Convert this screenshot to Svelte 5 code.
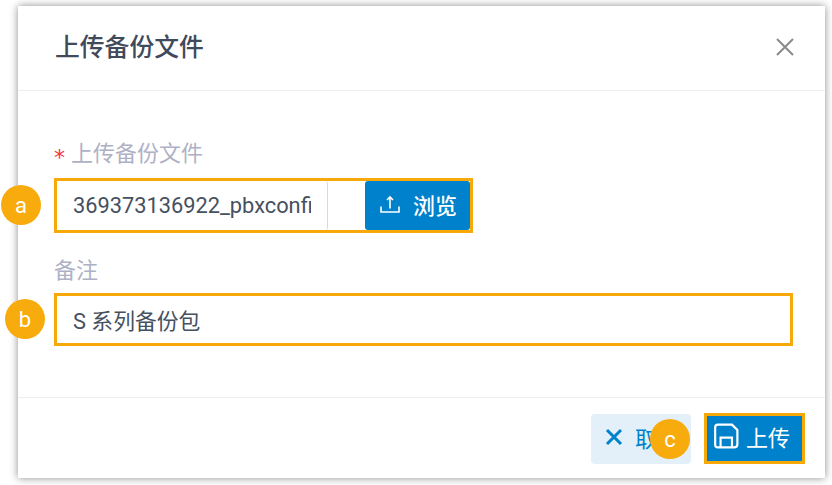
<script lang="ts">
	let fileName = '369373136922_pbxconfig.tar';
	let note = 'S 系列备份包';
</script>

<div class="page">
	<div class="modal">
		<header>
			<h2>上传备份文件</h2>
			<svg class="close" width="20" height="20" viewBox="0 0 20 20" aria-hidden="true">
				<path d="M2 2 L18 18 M18 2 L2 18" />
			</svg>
		</header>

		<div class="body">
			<div class="label first"><span class="req">*</span>上传备份文件</div>
			<div class="mark upload-row">
				<div class="input file"><span class="clip">{fileName}</span></div>
				<button class="primary browse">
					<svg class="up" width="20" height="20" viewBox="0 0 20 20" aria-hidden="true">
						<path d="M10 14.500 V3 M7 6 L10 3 L13 6 M1 12.500 V18 H19 V12.500" />
					</svg>
					<span>浏览</span>
				</button>
				<span class="badge" style="left: -56px; top: 4px">a</span>
			</div>

			<div class="label second">备注</div>
			<div class="mark note-row">
				<div class="input note">{note}</div>
				<span class="badge" style="left: -52px; top: 3px">b</span>
			</div>
		</div>

		<footer>
			<button class="cancel">
				<svg width="18" height="18" viewBox="0 0 18 18" aria-hidden="true">
					<path d="M2 2 L16 16 M16 2 L2 16" />
				</svg>
				<span>取消</span>
				<span class="badge" style="left: 59px; top: 5px">c</span>
			</button>
			<div class="mark save-mark">
				<button class="primary save">
					<svg width="26" height="26" viewBox="0 0 24 24" aria-hidden="true">
						<path d="M2 4 Q2 1.500 4.500 1.500 H17.500 L22.500 6.500 V19.500 Q22.500 22.500 19.500 22.500 H4.500 Q2 22.500 2 20 Z M7 22.500 V13.500 H17.500 V22.500" />
					</svg>
					<span>上传</span>
				</button>
			</div>
		</footer>
	</div>
</div>

<style>
	:global(body) {
		margin: 0;
		background: #fff;
	}
	.page {
		width: 832px;
		height: 485px;
		padding: 6px 7px 7px 18px;
		box-sizing: border-box;
		overflow: hidden;
		font-family: Roboto, 'Noto Sans CJK SC', sans-serif;
	}
	.modal {
		height: 472px;
		background: #fff;
		box-shadow: 0 0 8px rgba(0, 0, 0, 0.45);
		display: flex;
		flex-direction: column;
	}
	header {
		height: 78px;
		border-bottom: 1px solid #eeeef5;
		display: flex;
		align-items: center;
		justify-content: space-between;
		padding: 0 30px 6px 37px;
	}
	h2 {
		margin: 0;
		font-size: 24.800px;
		font-weight: 500;
		color: #3f4a5a;
	}
	.close {
		margin-top: 4px;
	}
	.close path {
		stroke: #8a8a8a;
		stroke-width: 2;
		fill: none;
	}
	.body {
		flex: 1;
		padding: 0 32px 0 36px;
	}
	.label {
		font-size: 22px;
		line-height: 30px;
		color: #aeb1c5;
	}
	.label.first {
		display: flex;
		margin-top: 48px;
		margin-bottom: 9px;
	}
	.label.second {
		margin-top: 23px;
		margin-bottom: 7px;
	}
	.req {
		font-family: 'DejaVu Sans', sans-serif;
		font-size: 22px;
		height: 30px;
		line-height: 38px;
		color: #f5313d;
		width: 17px;
	}
	.mark {
		border: 3px solid #f7a90a;
		position: relative;
		box-sizing: border-box;
	}
	.upload-row {
		width: 419px;
		height: 55px;
		display: flex;
		align-items: stretch;
	}
	.input {
		font-size: 21.800px;
		color: #46505f;
		display: flex;
		align-items: center;
		box-sizing: border-box;
		padding-left: 16px;
	}
	.file {
		width: 271px;
		border-right: 1px solid #d6d8e2;
		border-radius: 0 3px 3px 0;
		padding-right: 16px;
	}
	.clip {
		overflow: hidden;
		white-space: nowrap;
	}
	.note-row {
		width: 739px;
		height: 53px;
	}
	.note {
		height: 100%;
		padding-bottom: 1px;
	}
	button {
		border: none;
		font-family: inherit;
		display: flex;
		align-items: center;
		padding: 0;
		font-size: 22px;
		position: relative;
	}
	.primary {
		background: #0081cc;
		color: #fff;
	}
	.primary path {
		stroke: #fff;
		stroke-width: 2;
		fill: none;
	}
	.primary .up path {
		stroke-width: 1.600;
	}
	.browse {
		margin-left: 37px;
		width: 105px;
		border-radius: 3px;
		padding: 0 0 3px 15px;
		gap: 13px;
		font-weight: 500;
	}
	footer {
		height: 81px;
		border-top: 1px solid #eeeef5;
		display: flex;
		justify-content: flex-end;
		align-items: flex-start;
		padding: 15px 20px 0 0;
		gap: 13px;
		box-sizing: border-box;
	}
	.cancel {
		margin-top: 1px;
		width: 100px;
		height: 50px;
		background: #e3f0f9;
		color: #0081cc;
		border-radius: 4px;
		padding: 0 0 5px 14px;
		gap: 12px;
	}
	.cancel path {
		stroke: #0081cc;
		stroke-width: 3;
		fill: none;
	}
	.save-mark {
		width: 101px;
		height: 51px;
	}
	.save {
		width: 100%;
		height: 100%;
		padding: 0 0 6px 6px;
		gap: 7px;
	}
	.badge {
		position: absolute;
		width: 40px;
		height: 40px;
		border-radius: 50%;
		background: #f8ab0c;
		color: #fff;
		font-size: 22px;
		font-weight: 400;
		display: flex;
		align-items: center;
		justify-content: center;
	}
</style>
